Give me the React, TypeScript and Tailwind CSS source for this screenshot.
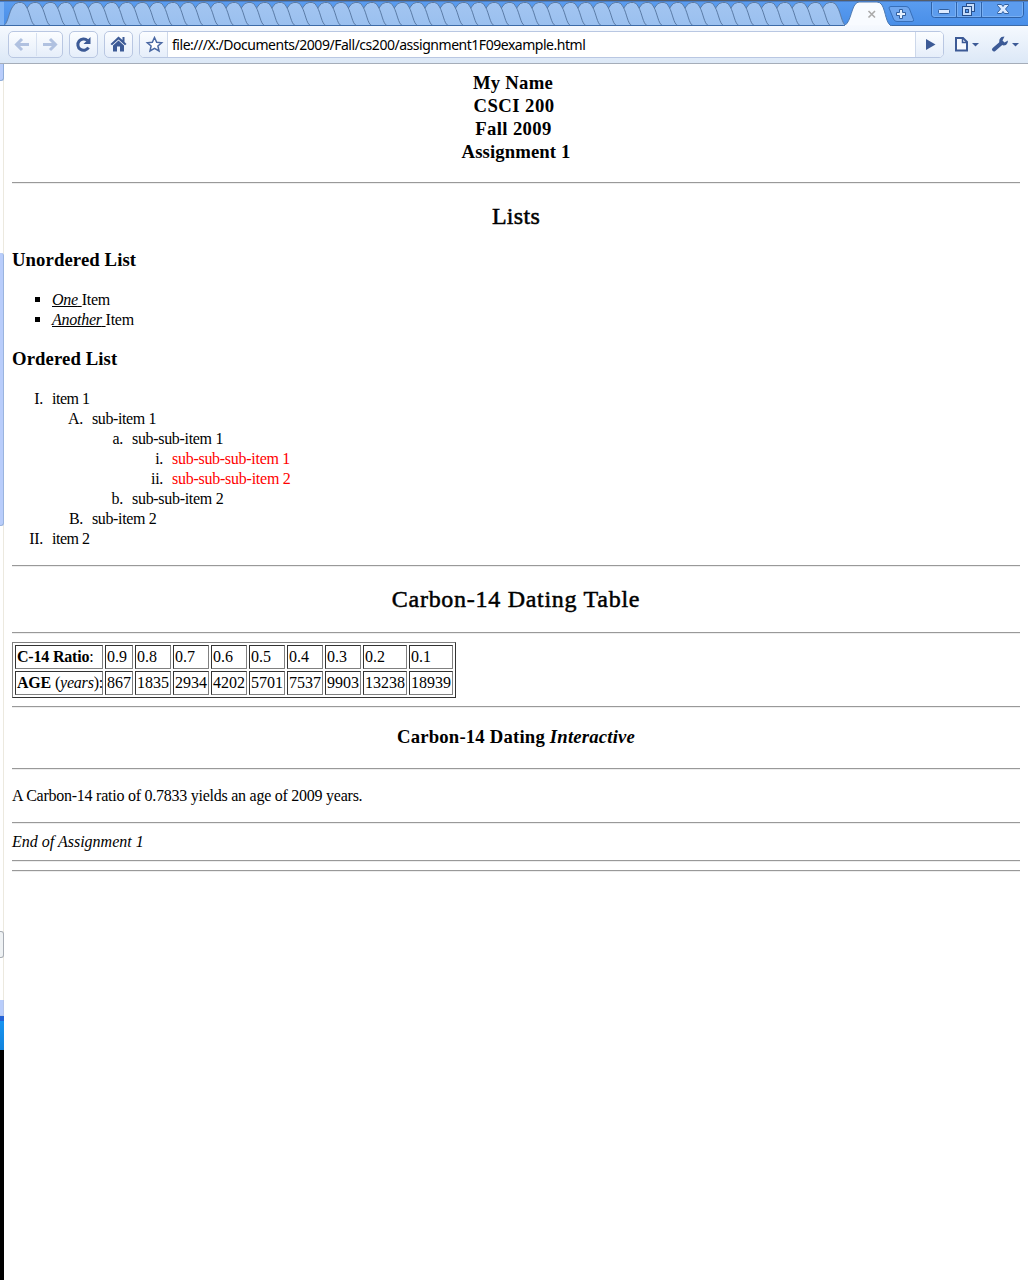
import React from "react";

const ICON = "#3c5a96";

const TABS = Array.from({ length: 54 }, (_, i) => 4 + i * 15.3).reverse();

function TabStrip() {
  return (
    <svg className="absolute left-0 top-0" width="1028" height="26" viewBox="0 0 1028 26">
      <defs>
        <linearGradient id="strip" x1="0" y1="0" x2="0" y2="1">
          <stop offset="0" stopColor="#5b9df0" />
          <stop offset="1" stopColor="#488ee8" />
        </linearGradient>
        <linearGradient id="tab" x1="0" y1="0" x2="0" y2="1">
          <stop offset="0" stopColor="#a3c5f1" />
          <stop offset="1" stopColor="#9ac0ef" />
        </linearGradient>
      </defs>
      <rect width="1028" height="26" fill="url(#strip)" />
      <rect width="4" height="26" fill="#7db2f4" />
      {TABS.map((x) => (
        <path
          key={x}
          d={`M${x} 25.5C${x + 4} 23 ${x + 5} 12 ${x + 8.5} 7Q${x + 11} 2.5 ${x + 14.5} 2.5H${x + 17.5}Q${x + 20.5} 2.5 ${x + 22.5} 7C${x + 26} 13 ${x + 27} 24 ${x + 31} 25.5Z`}
          fill="url(#tab)"
          stroke="#5a7ba6"
          strokeWidth="1"
        />
      ))}
      <path d="M0 25.5H1028" stroke="#3c6ba8" />
      <path d="M843 26C850 25 851 10 855 4.5Q857 2 859 2H877Q880 2 882 5C886 12 886 25 892 26Z" fill="#f8fbff" stroke="#4d79b0" />
      <path d="M845 26H890" stroke="#f6f9fe" strokeWidth="2" />
      <path d="M868.5 11L875 17.5M875 11L868.5 17.5" stroke="#aaa" strokeWidth="1.6" />
      <path d="M889 8Q889 6.5 891 6.5H906Q908.5 6.5 909.5 9L913.5 19.5Q914 21.5 912 21.5H897Q894.5 21.5 893.5 19Z" fill="#70a7ef" stroke="#376fb9" />
      <path d="M899.5 9.500h3v3h3v3h-3v3h-3v-3h-3v-3h3z" fill="#e4effd" stroke="#315f9f" />
      <path d="M931.5 2V14.5Q931.5 17.5 934.5 17.5H1020Q1023.5 17.5 1023.5 14V2" fill="#5c9cee" stroke="#2e62a9" />
      <path d="M956.5 2V17M981.5 2V17" stroke="#2e62a9" />
      <path d="M932.5 3V14Q932.5 16.5 935 16.5H955.5V3M957.5 3V16.5H980.5V3M982.5 3V16.5H1020Q1022.5 16.5 1022.5 14V3" stroke="#78aff3" fill="none" />
      <rect x="938.5" y="9.5" width="11" height="4" rx="1" fill="#dceaff" stroke="#315f9f" />
      <rect x="966.5" y="3.5" width="8" height="8" fill="#c5dcfa" stroke="#274f8b" />
      <rect x="962.5" y="6.5" width="9" height="9" fill="#c5dcfa" stroke="#274f8b" />
      <rect x="965.5" y="9.5" width="3" height="3" fill="#5c9cee" stroke="#274f8b" />
      <path d="M997.5 4.500h4l1.500 2 1.500-2h4v1l-3 3.500 3 3.500v1h-4l-1.500-2-1.500 2h-4v-1l3-3.500-3-3.500z" fill="#dceaff" stroke="#315f9f" />
      <path d="M0 0.5H1028" stroke="#555d68" />
      <path d="M0 1.5H1028" stroke="#4a7fc9" />
    </svg>
  );
}

function Toolbar() {
  const button =
    "h-[27px] shrink-0 rounded-[5px] border border-[#b9c7e2] bg-linear-to-b from-[#fbfdff] to-[#e6eefa] flex items-center justify-center";
  return (
    <div className="flex h-[38px] items-center border-b border-[#a5adb9] bg-linear-to-b from-[#f5f9fe] to-[#dce8f7] pl-2">
      <div className={`${button} w-[55px]`}>
        <svg width="53" height="25" fill="none" stroke="#b0c1e0" strokeWidth="3">
          <path d="M20 12.5H8M13 7L7.5 12.5L13 18" />
          <path d="M34 12.5H46M41 7L46.5 12.5L41 18" />
          <path d="M27.5 1V24" stroke="#d6e0f0" strokeWidth="1" />
        </svg>
      </div>
      <div className={`${button} ml-1.5 w-[29px]`}>
        <svg width="27" height="25" fill="none">
          <path d="M18.5 15.5A5.7 5.7 0 1 1 17.5 8.5" stroke={ICON} strokeWidth="3" />
          <path d="M20.5 5V12H13.5Z" fill={ICON} />
        </svg>
      </div>
      <div className={`${button} ml-1.5 w-[29px]`}>
        <svg width="27" height="25" fill={ICON}>
          <path d="M13.5 4.5L5.5 12L7 13.200L13.5 7.5L20 13.200L21.5 12L19.5 10V5H17.5V8Z" />
          <path d="M13.5 8.5L8 13.5V19.5H12V14.5H15V19.5H19V13.5Z" />
        </svg>
      </div>
      <div className="ml-1.5 flex h-[27px] w-[805px] shrink-0 overflow-hidden rounded-[5px] border border-[#b9c7e2] bg-white">
        <div className="w-7 border-r border-[#cdd8ea] bg-linear-to-b from-[#fbfdff] to-[#e6eefa]">
          <svg width="28" height="25">
            <path d="M14.5 5.5L16.7 10.2L21.7 10.7L17.9 14L19 19L14.5 16.4L10 19L11.1 14L7.3 10.7L12.3 10.2Z" fill="#fff" stroke="#4a68a3" strokeWidth="1.5" />
          </svg>
        </div>
        <div className="flex-1 whitespace-nowrap pl-1 font-['Noto_Sans',sans-serif] text-[14px] leading-[25px] tracking-[-0.47px] text-black">
          file:///X:/Documents/2009/Fall/cs200/assignment1F09example.html
        </div>
        <div className="w-7 border-l border-[#cdd8ea] bg-linear-to-b from-[#fbfdff] to-[#e6eefa]">
          <svg width="27" height="25">
            <path d="M10 7L19.5 12.5L10 18Z" fill={ICON} />
          </svg>
        </div>
      </div>
      <svg className="ml-2.5 shrink-0" width="70" height="27">
        <path d="M2 7H9L13 11V19.5H2Z" fill="#f6f9fe" stroke={ICON} strokeWidth="2" />
        <path d="M8.5 7V11.5H13" fill="none" stroke={ICON} strokeWidth="1.5" />
        <path d="M18 12H25L21.5 15.5Z" fill={ICON} />
        <path d="M40 18.5L47.5 12" stroke={ICON} strokeWidth="4" strokeLinecap="round" />
        <path d="M50.5 5.5L47.5 6Q44.5 8 45.5 12Q48 15.5 52 14Q54 12 54 9.5L50.5 11.5L48.5 9.5Z" fill={ICON} />
        <path d="M58 12H65L61.5 15.5Z" fill={ICON} />
      </svg>
    </div>
  );
}

function Sliver() {
  return (
    <div className="flex w-1 shrink-0 flex-col border-r border-[#ece9df] bg-white">
      <div className="h-[17px] w-1 shrink-0 rounded-br-[3px] border-b border-r border-[#8fadd9] bg-[#b9cdfb]" />
      <div className="mt-[172px] h-[273px] w-1 shrink-0 rounded-r-[3px] border-b border-r border-[#9ab4de] bg-[#b9cdfb]" />
      <div className="mt-[405px] h-[27px] w-1 shrink-0 rounded-r-[3px] border-y border-r border-[#a8adb4] bg-[#eff2f4]" />
      <div className="mt-[42px] h-4 w-1 shrink-0 border-b border-r border-[#b5c5e8] bg-[#b9cdfb]" />
      <div className="h-[5px] w-1 shrink-0 bg-[#2462d6]" />
      <div className="h-[29px] w-1 shrink-0 bg-linear-to-b from-[#1794f0] to-[#1283dd]" />
      <div className="w-1 flex-1 bg-black" />
    </div>
  );
}

function Rule({ className }: { className: string }) {
  return <hr className={`h-0.5 border-0 border-t border-[#999] bg-[#eee] ${className}`} />;
}

function Item({ marker, pad, track, children, red }: { marker: string; pad: string; track: string; children: React.ReactNode; red?: boolean }) {
  return (
    <li className={`flex h-5 leading-5 ${pad}`}>
      <span className="w-[31px] shrink-0 text-right tracking-[-0.3px]">{marker}</span>
      <span className={`ml-[9px] ${track} ${red ? "text-[#f00]" : ""}`}>{children}</span>
    </li>
  );
}

const TABLE = [
  ["0.9", "867", "w-[28px]"],
  ["0.8", "1835", "w-[36px]"],
  ["0.7", "2934", "w-[36px]"],
  ["0.6", "4202", "w-[36px]"],
  ["0.5", "5701", "w-[36px]"],
  ["0.4", "7537", "w-[36px]"],
  ["0.3", "9903", "w-[36px]"],
  ["0.2", "13238", "w-[44px]"],
  ["0.1", "18939", "w-[44px]"],
];

const CELL = "h-6 shrink-0 whitespace-nowrap border border-l-[#333] border-t-[#333] border-b-[#808080] border-r-[#808080] pl-px leading-[22px]";

export default function App() {
  return (
    <div className="flex h-[1280px] w-[1028px] flex-col overflow-hidden bg-white font-['Liberation_Serif',serif] text-[16px] text-black">
      <div className="relative h-[26px] shrink-0">
        <TabStrip />
      </div>
      <Toolbar />
      <div className="flex flex-1">
        <Sliver />
        <main className="flex-1 px-2 pt-[7px]">
          <h3 className="text-center text-[18.72px] font-bold leading-[23px]">
            <span className="block pr-[6px] tracking-[0.25px]">My Name</span>
            <span className="block pr-[4px] tracking-[0.45px]">CSCI 200</span>
            <span className="block pr-[5px] tracking-[0.35px]">Fall 2009</span>
            <span className="block tracking-[0.1px]">Assignment 1</span>
          </h3>
          <Rule className="mt-[19px]" />
          <h2 className="mt-[18px] text-center text-[24px] leading-7 tracking-[0.3px] [-webkit-text-stroke:0.5px_black]">Lists</h2>
          <h3 className="mt-[18px] text-[18.72px] font-bold leading-[23px] tracking-[0.1px]">Unordered List</h3>
          <ul className="mt-[19px] tracking-[-0.25px]">
            {["One", "Another"].map((word) => (
              <li key={word} className="flex h-5 items-center leading-5">
                <span className="-mt-0.5 ml-[23px] mr-3 size-[5px] bg-black" />
                <span className="whitespace-pre"><i className="underline">{word} </i>Item</span>
              </li>
            ))}
          </ul>
          <h3 className="mt-[17px] text-[18.72px] font-bold leading-[23px] tracking-[0.1px]">Ordered List</h3>
          <ol className="mt-[19px]">
            <Item marker="I." pad="" track="tracking-[-0.5px]">item 1</Item>
            <Item marker="A." pad="pl-10" track="tracking-[-0.4px]">sub-item 1</Item>
            <Item marker="a." pad="pl-20" track="tracking-[-0.32px]">sub-sub-item 1</Item>
            <Item marker="i." pad="pl-[120px]" track="tracking-[-0.28px]" red>sub-sub-sub-item 1</Item>
            <Item marker="ii." pad="pl-[120px]" track="tracking-[-0.25px]" red>sub-sub-sub-item 2</Item>
            <Item marker="b." pad="pl-20" track="tracking-[-0.3px]">sub-sub-item 2</Item>
            <Item marker="B." pad="pl-10" track="tracking-[-0.37px]">sub-item 2</Item>
            <Item marker="II." pad="" track="tracking-[-0.5px]">item 2</Item>
          </ol>
          <Rule className="mt-4" />
          <h2 className="mt-[18px] text-center text-[24px] leading-7 tracking-[0.72px] [-webkit-text-stroke:0.5px_black]">Carbon-14 Dating Table</h2>
          <Rule className="mt-[19px]" />
          <div className="mt-2 flex h-14 w-[444px] gap-0.5 border border-l-[#808080] border-t-[#808080] border-b-[#333] border-r-[#333] p-0.5">
            <div className="flex w-[88px] shrink-0 flex-col gap-0.5 tracking-[-0.2px]">
              <div className={CELL}><b>C-14 Ratio</b>:</div>
              <div className={CELL}><b>AGE</b> (<i>years</i>):</div>
            </div>
            {TABLE.map(([ratio, age, width]) => (
              <div key={ratio} className={`flex shrink-0 flex-col gap-0.5 ${width}`}>
                <div className={CELL}>{ratio}</div>
                <div className={CELL}>{age}</div>
              </div>
            ))}
          </div>
          <Rule className="mt-2" />
          <h3 className="mt-[17px] text-center text-[18.72px] font-bold leading-[23px] tracking-[0.19px]">Carbon-14 Dating <i>Interactive</i></h3>
          <Rule className="mt-5" />
          <p className="mt-4 leading-5 tracking-[-0.25px]">A Carbon-14 ratio of 0.7833 yields an age of 2009 years.</p>
          <Rule className="mt-4" />
          <p className="mt-2 italic leading-5">End of Assignment 1</p>
          <Rule className="mt-2" />
          <Rule className="mt-2" />
        </main>
      </div>
    </div>
  );
}
